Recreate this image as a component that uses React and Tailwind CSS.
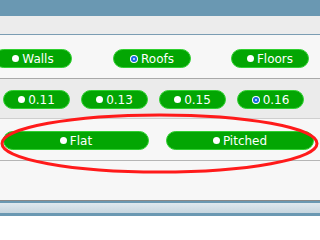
import React from 'react';

const font = { fontFamily: '"DejaVu Sans", Verdana, sans-serif' };

// boton verde tipo radio
const Opcion = ({ label, activo, className = '' }) => (
  <div
    className={`h-[19px] flex items-center justify-center gap-[3px] rounded-full bg-[#03a603] border border-[#30d030] text-white text-[12px] leading-none ${className}`}
  >
    {activo ? (
      <span className="w-[8px] h-[8px] rounded-full bg-white flex items-center justify-center">
        <span className="w-[6px] h-[6px] rounded-full border-2 border-[#1668e3] bg-[#d9e6ff]"></span>
      </span>
    ) : (
      <span className="w-[7px] h-[7px] rounded-full bg-white"></span>
    )}
    <span>{label}</span>
  </div>
);

export default function App() {
  return (
    <div className="relative w-[320px] h-[240px] overflow-hidden bg-white" style={font}>
      {/* barra superior */}
      <div className="h-[16px] bg-[#6a98b2]"></div>
      <div className="h-[18px] bg-[#ececec]"></div>
      <div className="h-[1px] bg-[#7b9db3]"></div>

      {/* fila 1 */}
      <div className="h-[44px] bg-[#f7f7f7] border-b border-[#a9a9a9] pt-[14px] flex">
        <Opcion label="Walls" className="w-[78px] ml-[-6px]" />
        <Opcion label="Roofs" activo className="w-[78px] ml-[41px]" />
        <Opcion label="Floors" className="w-[78px] ml-[40px]" />
      </div>

      {/* fila 2 */}
      <div className="h-[40px] bg-[#ebebeb] border-b border-[#cfcfcf] pt-[11px] pl-[3px] flex gap-[11px]">
        <Opcion label="0.11" className="w-[67px]" />
        <Opcion label="0.13" className="w-[67px]" />
        <Opcion label="0.15" className="w-[67px]" />
        <Opcion label="0.16" activo className="w-[67px]" />
      </div>

      {/* fila 3 */}
      <div className="h-[42px] bg-[#f7f7f7] border-b border-[#b5b5b5] pt-[12px] pl-[3px] flex gap-[17px]">
        <Opcion label="Flat" className="w-[146px]" />
        <Opcion label="Pitched" className="w-[148px]" />
      </div>

      {/* fila vacia */}
      <div className="h-[40px] bg-[#f7f7f7] border-b border-[#888888]"></div>

      {/* barra inferior */}
      <div className="h-[15px] border-t-2 border-b-[3px] border-[#6a98b2] bg-gradient-to-b from-[#dfe8ee] to-[#c6d5de]"></div>

      {/* marca roja */}
      <svg className="absolute left-0 top-0 pointer-events-none" width="320" height="240">
        <ellipse cx="159.5" cy="143.5" rx="157.5" ry="28.5" fill="none" stroke="#ff1a1a" strokeWidth="3" />
      </svg>
    </div>
  );
}
